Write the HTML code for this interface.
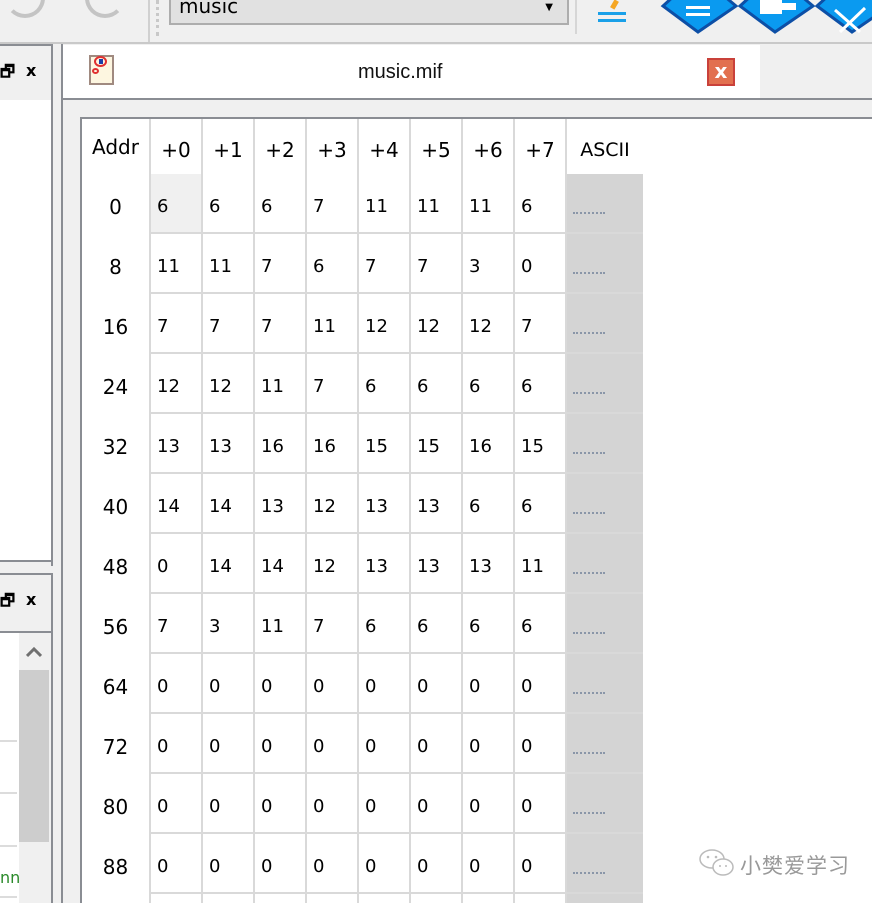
<!DOCTYPE html>
<html style="overflow:hidden;width:872px;height:903px"><head><meta charset="utf-8"><style>
*{margin:0;padding:0;box-sizing:border-box}
body{width:872px;height:903px;overflow:hidden;background:#f0f0f0;font-family:"DejaVu Sans","Liberation Sans",sans-serif;color:#000}
#wrap{position:relative;width:872px;height:903px;overflow:hidden}
.a{position:absolute}
#hdr,#rows{position:absolute;left:151px;display:grid;grid-template-columns:repeat(8,50px) 76px;column-gap:2px;background:#d9d9d9}
#hdr{top:119px;height:55px}
#hdr div{background:#fff;font-size:20px;text-align:center;line-height:62px}
#hdr div:last-child{font-size:19px}
#rows{top:174px;row-gap:2px;grid-auto-rows:58px;height:720px}
#rows div{background:#fff;font-size:18px;padding-left:6px;line-height:66px}
#rows div.s{background:#d4d4d4;position:relative}
#rows div.s:after{content:"";position:absolute;left:6px;top:38px;width:32px;height:2px;border-top:2px dotted #8a96a8}
#rows div.g{background:#f0f0f0}
#addr div{height:60px;font-size:20px;text-align:center;line-height:66px}
</style></head><body><div id="wrap">
<!-- toolbar -->
<div class="a" style="left:0;top:0;width:872px;height:42px;background:#f0f0f0"></div>
<div class="a" style="left:0;top:42px;width:872px;height:2px;background:#c9c9c9"></div>
<div class="a" style="left:5px;top:-22px;width:40px;height:40px;border:4px solid #c4c4c4;border-radius:50%;border-left-color:transparent"></div>
<div class="a" style="left:85px;top:-22px;width:40px;height:40px;border:4px solid #c4c4c4;border-radius:50%;border-right-color:transparent"></div>
<div class="a" style="left:148px;top:0;width:2px;height:42px;background:#d0d0d0"></div>
<div class="a" style="left:156px;top:0;width:3px;height:36px;border-left:3px dotted #c8c8c8"></div>
<div class="a" style="left:169px;top:-6px;width:400px;height:31px;background:#e1e1e1;border:2px solid #adadad;font-size:20px;padding-left:8px;line-height:20px">music<span style="position:absolute;right:14px;top:2px;font-size:10px">▼</span></div>
<div class="a" style="left:575px;top:0;width:2px;height:34px;background:#d6d6d6"></div>
<div class="a" style="left:598px;top:12px;width:28px;height:3px;background:#1aa0e8"></div>
<div class="a" style="left:598px;top:19px;width:28px;height:3px;background:#1aa0e8"></div>
<div class="a" style="left:612px;top:0;width:5px;height:9px;background:#f5a623;transform:rotate(30deg)"></div>
<svg class="a" style="left:660px;top:-36px" width="212" height="72"><g fill="#0a9af0" stroke="#0d4fa6" stroke-width="3"><path d="M38 10 L76 42 L38 68 L3 42Z"/><path d="M115 10 L153 42 L115 68 L80 42Z"/><path d="M192 10 L230 42 L192 68 L157 42Z"/></g><g fill="#fff"><rect x="26" y="42" width="24" height="3"/><rect x="26" y="49" width="24" height="3"/><rect x="100" y="36" width="22" height="14"/><rect x="120" y="39" width="16" height="7"/></g><path d="M175 46 L200 68 M180 68 L205 44" stroke="#fff" stroke-width="3"/></svg>

<!-- left panels -->
<div class="a" style="left:0;top:45px;width:51px;height:55px;background:#f0f0f0"></div>
<div class="a" style="left:0;top:100px;width:51px;height:462px;background:#fff;border-bottom:2px solid #8a8d93"></div>
<div class="a" style="left:51px;top:44px;width:2px;height:522px;background:#8a8d93"></div>
<div class="a" style="left:0;top:44px;width:53px;height:2px;background:#8a8d93"></div>
<div class="a" style="left:0;top:63px;font-size:16px;font-weight:bold;line-height:18px">🗗</div>
<div class="a" style="left:26px;top:61px;font-size:16px;font-weight:bold">x</div>
<div class="a" style="left:0;top:573px;width:53px;height:2px;background:#8a8d93"></div>
<div class="a" style="left:51px;top:573px;width:2px;height:330px;background:#8a8d93"></div>
<div class="a" style="left:0;top:592px;font-size:16px;font-weight:bold;line-height:18px">🗗</div>
<div class="a" style="left:26px;top:590px;font-size:16px;font-weight:bold">x</div>
<div class="a" style="left:0;top:631px;width:51px;height:2px;background:#8a8d93"></div>
<div class="a" style="left:0;top:633px;width:19px;height:270px;background:#fff"></div>
<div class="a" style="left:0;top:740px;width:17px;height:2px;background:#dcdcdc"></div>
<div class="a" style="left:0;top:792px;width:17px;height:2px;background:#dcdcdc"></div>
<div class="a" style="left:0;top:845px;width:17px;height:2px;background:#dcdcdc"></div>
<div class="a" style="left:0;top:896px;width:17px;height:2px;background:#dcdcdc"></div>
<div class="a" style="left:0;top:868px;font-size:16px;color:#2a8a2a">nn</div>
<div class="a" style="left:19px;top:633px;width:31px;height:270px;background:#f0f0f0"></div>
<div class="a" style="left:19px;top:670px;width:30px;height:172px;background:#cdcdcd"></div>
<svg class="a" style="left:26px;top:646px" width="16" height="12"><path d="M1 10 L8 3 L15 10" stroke="#707070" stroke-width="3" fill="none"/></svg>

<!-- tab -->
<div class="a" style="left:61px;top:44px;width:2px;height:859px;background:#8a8d93"></div>
<div class="a" style="left:63px;top:45px;width:697px;height:53px;background:#fff"></div>
<div class="a" style="left:63px;top:98px;width:809px;height:2px;background:#8a8d93"></div>
<div class="a" style="left:89px;top:55px;width:25px;height:30px;background:#fdf6e0;border:2px solid #a08a80"></div>
<div class="a" style="left:94px;top:56px;width:13px;height:11px;border:2px solid #e03030;border-radius:50%"></div>
<div class="a" style="left:99px;top:59px;width:4px;height:5px;background:#1a3ea8"></div>
<div class="a" style="left:92px;top:68px;width:7px;height:6px;border:2px solid #e03030;border-radius:50%"></div>
<div class="a" style="left:358px;top:61px;font-size:20px;font-family:'Liberation Sans','DejaVu Sans',sans-serif;color:#111">music.mif</div>
<div class="a" style="left:707px;top:58px;width:28px;height:28px;background:#e2704f;border:2px solid #c9413a;color:#fff;font-weight:bold;font-size:20px;text-align:center;line-height:23px">x</div>

<!-- content -->
<div class="a" style="left:80px;top:117px;width:792px;height:786px;background:#8a8d93"></div>
<div class="a" style="left:82px;top:119px;width:790px;height:784px;background:#fff"></div>
<div class="a" style="left:149px;top:119px;width:2px;height:784px;background:#d9d9d9"></div>
<div id="addr" class="a" style="left:82px;top:114px;width:67px">
<div>Addr</div><div>0</div><div>8</div><div>16</div><div>24</div><div>32</div><div>40</div><div>48</div><div>56</div><div>64</div><div>72</div><div>80</div><div>88</div>
</div>
<div id="hdr"><div>+0</div><div>+1</div><div>+2</div><div>+3</div><div>+4</div><div>+5</div><div>+6</div><div>+7</div><div style="background:#fff">ASCII</div></div>
<div id="rows">
<div class="g">6</div><div>6</div><div>6</div><div>7</div><div>11</div><div>11</div><div>11</div><div>6</div><div class="s"></div>
<div>11</div><div>11</div><div>7</div><div>6</div><div>7</div><div>7</div><div>3</div><div>0</div><div class="s"></div>
<div>7</div><div>7</div><div>7</div><div>11</div><div>12</div><div>12</div><div>12</div><div>7</div><div class="s"></div>
<div>12</div><div>12</div><div>11</div><div>7</div><div>6</div><div>6</div><div>6</div><div>6</div><div class="s"></div>
<div>13</div><div>13</div><div>16</div><div>16</div><div>15</div><div>15</div><div>16</div><div>15</div><div class="s"></div>
<div>14</div><div>14</div><div>13</div><div>12</div><div>13</div><div>13</div><div>6</div><div>6</div><div class="s"></div>
<div>0</div><div>14</div><div>14</div><div>12</div><div>13</div><div>13</div><div>13</div><div>11</div><div class="s"></div>
<div>7</div><div>3</div><div>11</div><div>7</div><div>6</div><div>6</div><div>6</div><div>6</div><div class="s"></div>
<div>0</div><div>0</div><div>0</div><div>0</div><div>0</div><div>0</div><div>0</div><div>0</div><div class="s"></div>
<div>0</div><div>0</div><div>0</div><div>0</div><div>0</div><div>0</div><div>0</div><div>0</div><div class="s"></div>
<div>0</div><div>0</div><div>0</div><div>0</div><div>0</div><div>0</div><div>0</div><div>0</div><div class="s"></div>
<div>0</div><div>0</div><div>0</div><div>0</div><div>0</div><div>0</div><div>0</div><div>0</div><div class="s"></div>
</div>
<div class="a" style="left:151px;top:894px;width:416px;height:9px;background:repeating-linear-gradient(90deg,#fff 0 50px,#d9d9d9 50px 52px)"></div>
<div class="a" style="left:567px;top:894px;width:76px;height:9px;background:#d4d4d4"></div>

<!-- watermark -->
<svg class="a" style="left:698px;top:848px" width="38" height="30"><g fill="none" stroke="#bbb" stroke-width="1.5"><ellipse cx="14" cy="11" rx="12" ry="9"/><ellipse cx="25" cy="19" rx="10" ry="8" fill="#fff"/></g><g fill="#bbb"><circle cx="10" cy="9" r="1.3"/><circle cx="18" cy="9" r="1.3"/><circle cx="22" cy="18" r="1"/><circle cx="28" cy="18" r="1"/></g></svg>
<div class="a" style="left:740px;top:850px;font-size:21px;color:#999;font-family:'Liberation Sans','Noto Sans CJK SC',sans-serif;letter-spacing:1px">小樊爱学习</div>
</div></body></html>
